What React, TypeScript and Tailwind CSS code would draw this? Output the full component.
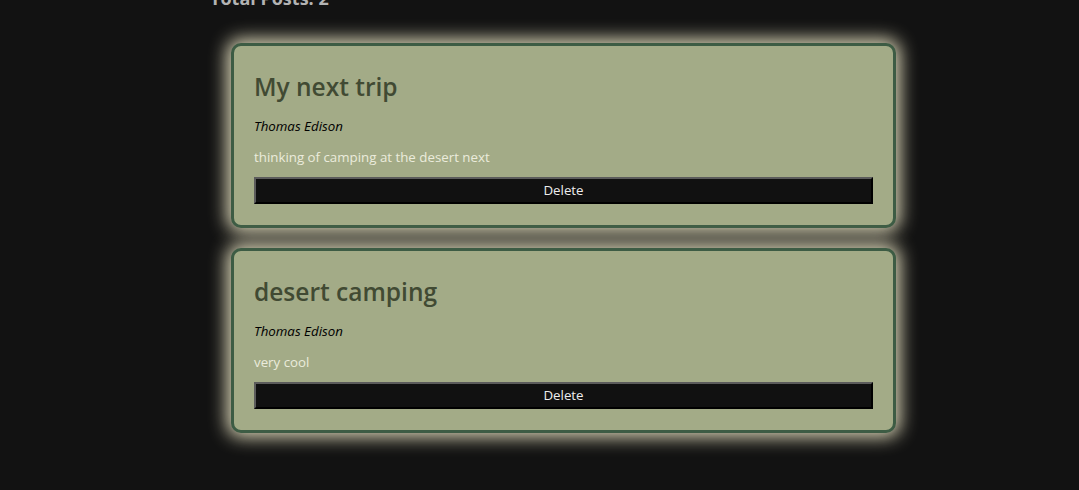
import React from 'react';

type Post = {
    id: number;
    title: string;
    author: string;
    body: string;
};

const posts: Post[] = [
    { id: 1, title: 'My next trip', author: 'Thomas Edison', body: 'thinking of camping at the desert next' },
    { id: 2, title: 'desert camping', author: 'Thomas Edison', body: 'very cool' },
];

const PostCard: React.FC<{ post: Post }> = ({ post }) => (
    <div className="mx-[21px] flex flex-col rounded-[10px] border-[3px] border-[#3d5c44] bg-[#a3ab87] px-5 pb-[21px] pt-[25px] shadow-[0_0_18px_4px_rgba(245,240,205,0.9)]">
        <h2 className="text-[24.5px] leading-[32px] font-semibold text-[#414a33]">{post.title}</h2>
        <p className="mt-[13px] text-[13.3px] leading-5 italic text-black">{post.author}</p>
        <p className="mt-[11px] text-[13.3px] leading-5 text-[#ebebdc]">{post.body}</p>
        <button className="mt-[10px] h-[27px] w-full border-2 border-t-[#5c5c5c] border-l-[#5c5c5c] border-b-black border-r-black bg-[#111111] text-[13.3px] text-[#ededed]">
            Delete
        </button>
    </div>
);

export default function App() {
    return (
        <div className="h-[490px] w-full overflow-hidden bg-[#121212] font-['Open_Sans','Noto_Sans',sans-serif]">
            <div className="ml-[210px] w-[707px]">
                {/* Header */}
                <h1 className="-mt-[15px] text-[18px] leading-[27px] font-bold text-[#b3b3b3]">Total Posts: {posts.length}</h1>

                {/* Posts */}
                <div className="mt-[31px] flex flex-col gap-5">
                    {posts.map((post) => (
                        <PostCard key={post.id} post={post} />
                    ))}
                </div>
            </div>
        </div>
    );
}
